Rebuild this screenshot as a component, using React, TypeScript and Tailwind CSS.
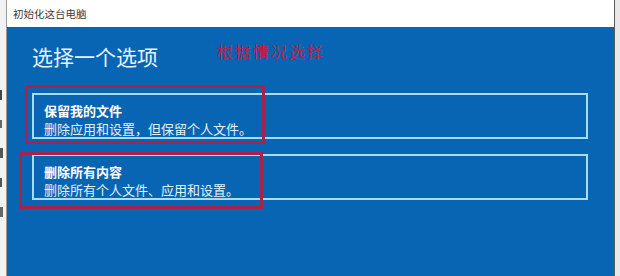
const font = { fontFamily: '"Noto Sans CJK SC", "Noto Sans", sans-serif' };

const options = [
  { title: '保留我的文件', desc: '删除应用和设置，但保留个人文件。' },
  { title: '删除所有内容', desc: '删除所有个人文件、应用和设置。' },
];

export default function App() {
  return (
    <div className="flex h-[276px] w-[620px] overflow-hidden bg-[#ececec]" style={font}>
      {/* background window peeking out on the left (only slivers of glyphs visible) */}
      <div className="flex w-[7px] shrink-0 flex-col items-start gap-[20px] border-r border-[#9a9a9a] bg-[#f2f2f2] pt-[90px]">
        <div className="h-[10px] w-[2px] bg-[#444]" />
        <div className="h-[8px] w-[2px] bg-[#666]" />
        <div className="h-[10px] w-[3px] bg-[#555]" />
        <div className="h-[9px] w-[2px] bg-[#555]" />
        <div className="h-[10px] w-[3px] bg-[#666]" />
      </div>

      <div className="flex w-[607px] shrink-0 flex-col">
        <div className="flex h-[27px] items-center bg-white pl-[6px] text-[10.5px] text-[#3a3a3a]">
          初始化这台电脑
        </div>
        <div className="relative flex-1 bg-[#0865b3] pl-[25px] pr-[26px] pt-[14px]">
          <h1 className="text-[21px] leading-[30px] text-[#e6f3ff]">选择一个选项</h1>

          <div className="mt-[22px] flex flex-col gap-[15px]">
            {options.map((o) => (
              <div key={o.title} className="h-[46px] border-2 border-[#a8dcf3] pl-[10px] pt-[7px]">
                <div className="text-[13px] font-bold leading-[18px] text-white">{o.title}</div>
                <div className="text-[13px] leading-[18px] text-[#e3f1fb]">{o.desc}</div>
              </div>
            ))}
          </div>

          {/* red annotations drawn over the screenshot */}
          <span className="absolute left-[210px] top-[12px] text-[16px] tracking-[2px] text-[#b3254e]">
            根据情况选择
          </span>
          <div className="absolute left-[18px] top-[58px] h-[59px] w-[240px] border-[3px] border-[#a9224a]" />
          <div className="absolute left-[12px] top-[125px] h-[57px] w-[244px] border-[3px] border-[#a9224a]" />
        </div>
      </div>

      <div className="w-[6px] shrink-0 border-l border-[#5a5a5a] bg-[#e8e8e8]" />
    </div>
  );
}
